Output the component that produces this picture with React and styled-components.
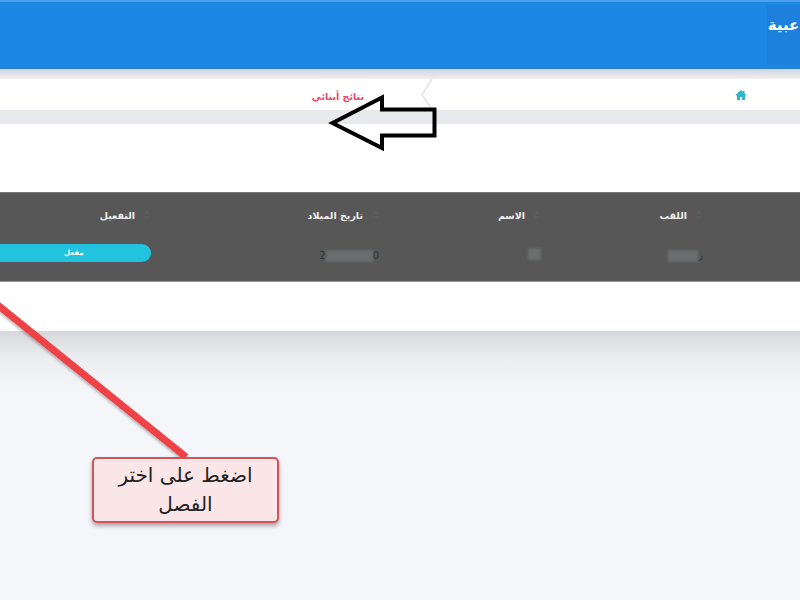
import React from "react";
import styled, { createGlobalStyle } from "styled-components";
import { ChevronsUpDown } from "lucide-react";

const Global = createGlobalStyle`
  html, body { margin: 0; padding: 0; background: #f4f6fa; }
  body { width: 800px; height: 600px; overflow: hidden; font-family: "DejaVu Sans", sans-serif; }
`;

const Page = styled.div`
  position: relative;
  width: 800px;
  height: 600px;
  overflow: hidden;
  background: #f4f6fa;
`;

const Header = styled.header`
  border-top: 2px solid #4ba2ea;
  border-bottom: 1px solid #2a7cc4;
  background: #1c88e4;
  display: flex;
  justify-content: flex-end;
  padding-top: 3px;
  height: 63px;
`;

const Brand = styled.div`
  width: 33px;
  height: 60px;
  background: #1c80dc;
  direction: rtl;
  text-align: center;
  padding-top: 8px;
  box-sizing: border-box;
  font-size: 15px;
  font-weight: 700;
  line-height: 24px;
  color: #fff;
  white-space: nowrap;
`;

const HeaderShade = styled.div`
  height: 10px;
  background: linear-gradient(#ccd5e3, #f3eeee);
`;

const Crumbs = styled.nav`
  height: 31px;
  background: #fff;
  direction: rtl;
  display: flex;
  align-items: center;
  padding-right: 53px;
`;

const HomeIcon = styled.svg`
  width: 12px;
  height: 12px;
  fill: #2fb4cc;
  flex: none;
`;

const CrumbSep = styled.svg`
  width: 12px;
  height: 31px;
  margin-right: 302px;
  flex: none;
  fill: none;
  stroke: #e2e3e8;
  stroke-width: 1.5;
`;

const CrumbTitle = styled.span`
  margin-right: 57px;
  padding-top: 4px;
  font-size: 9.5px;
  font-weight: 700;
  color: #e9486c;
`;

const GreyStrip = styled.div`
  height: 14px;
  background: #e8e9ec;
`;

const Card = styled.section`
  height: 207px;
  background: #fff;
  padding-top: 68px;
  box-sizing: border-box;
`;

const Table = styled.div`
  height: 90px;
  background: #575757;
  border-top: 1px solid #777;
  border-bottom: 1px solid #999;
  box-sizing: border-box;
  direction: rtl;
  display: grid;
  grid-template-columns: 90px 162px 162px 228px 158px;
  grid-template-rows: 45px 43px;
`;

const HeadCell = styled.div`
  display: flex;
  align-items: center;
  gap: 7px;
  padding: 0 6px 1px 0;
  font-size: 9.5px;
  font-weight: 700;
  color: #eee;
  white-space: nowrap;
`;

const SortIcon = styled(ChevronsUpDown)`
  color: #666;
  flex: none;
`;

const BodyCell = styled.div`
  display: flex;
  align-items: flex-start;
  padding: 10px 7px 0 0;
  font-size: 10px;
  color: #2c2c2c;
  line-height: 16px;
`;

const DateText = styled.div`
  direction: ltr;
  display: flex;
  align-items: center;
  font-size: 10px;
  color: #333;
`;

const Smudge = styled.span`
  display: block;
  width: ${(p) => p.$w}px;
  height: 12px;
  background: #6b6d6e;
  filter: blur(1.5px);
`;

const Badge = styled.div`
  width: 100%;
  height: 18px;
  margin-top: -4px;
  border-radius: 0 9px 9px 0;
  background: #22c3de;
  color: #fff;
  font-size: 7px;
  font-weight: 700;
  display: flex;
  align-items: center;
  justify-content: flex-end;
  padding-left: 64px;
  box-sizing: border-box;
`;

const CardShade = styled.div`
  height: 64px;
  background: linear-gradient(#d6d8db, #eceef2 45%, #f4f6fa);
`;

const Overlay = styled.svg`
  position: absolute;
  inset: 0;
  width: 800px;
  height: 600px;
  pointer-events: none;
`;

const Callout = styled.div`
  position: absolute;
  left: 92px;
  top: 457px;
  width: 187px;
  height: 66px;
  box-sizing: border-box;
  padding: 2px 8px 0;
  direction: rtl;
  text-align: center;
  border: 2px solid #d0555a;
  border-radius: 5px;
  background: #fbe6e7;
  box-shadow: 0 3px 4px rgba(90, 60, 60, 0.45);
  color: #222;
  font-size: 20px;
  line-height: 29px;
`;

const columns = ["اللقب", "الاسم", "تاريخ الميلاد", "التفعيل"];

export default function App() {
  return (
    <Page>
      <Global />
      <Header>
        <Brand>عبية</Brand>
      </Header>
      <HeaderShade />
      <Crumbs>
        <HomeIcon viewBox="0 0 24 24">
          <path d="M12 2 1 12l1.5 1.6L4 12.3V22h6v-6h4v6h6v-9.7l1.5 1.3L23 12l-4-3.6V4h-3v1.7z" />
        </HomeIcon>
        <CrumbSep viewBox="0 0 12 31">
          <path d="M11 0 1 15.5 11 31" />
        </CrumbSep>
        <CrumbTitle>نتائج أبنائي</CrumbTitle>
      </Crumbs>
      <GreyStrip />
      <Card>
        <Table>
          <HeadCell />
          {columns.map((c) => (
            <HeadCell key={c}>
              <SortIcon size={10} />
              {c}
            </HeadCell>
          ))}
          <BodyCell />
          <BodyCell>
            <DateText>
              <Smudge $w={30} />ز
            </DateText>
          </BodyCell>
          <BodyCell>
            <Smudge $w={13} />
          </BodyCell>
          <BodyCell>
            <DateText>
              2<Smudge $w={47} />0
            </DateText>
          </BodyCell>
          <BodyCell>
            <Badge>مفعل</Badge>
          </BodyCell>
        </Table>
      </Card>
      <CardShade />
      <Overlay viewBox="0 0 800 600">
        <defs>
          <filter id="lineShadow" x="-10%" y="-10%" width="120%" height="120%">
            <feDropShadow dx="0" dy="2" stdDeviation="1.5" floodColor="#000" floodOpacity="0.3" />
          </filter>
        </defs>
        <line x1="-6" y1="302" x2="186" y2="457" stroke="#ee4347" strokeWidth="7" filter="url(#lineShadow)" />
        <path
          d="M332.500 123 382 97.500V109.500H434.500V135.500H382V148z"
          fill="none"
          stroke="#000"
          strokeWidth="4"
          strokeLinejoin="miter"
        />
      </Overlay>
      <Callout>اضغط على اختر الفصل</Callout>
    </Page>
  );
}
